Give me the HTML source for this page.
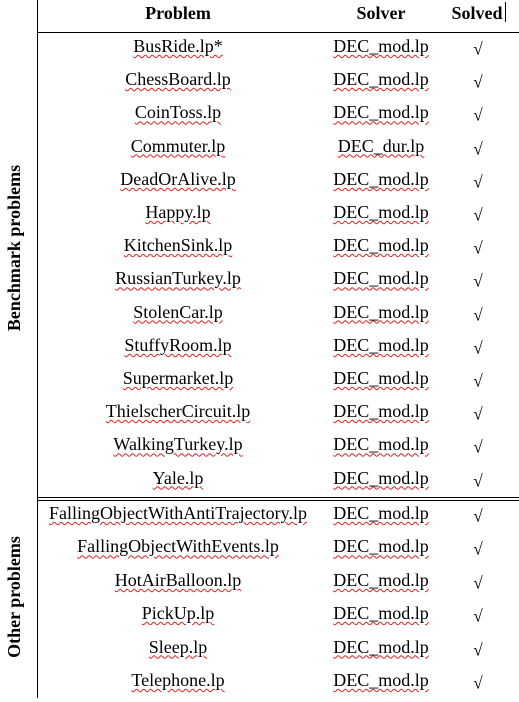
<!DOCTYPE html>
<html><head><style>
body{margin:0;width:519px;height:702px;background:#fff;position:relative;overflow:hidden;font-family:"Liberation Serif",serif;font-size:18px;color:#000}
.t{position:absolute;transform:translate(-50%,-50%);white-space:nowrap;line-height:1}
.w{text-decoration:underline wavy #e02020;text-decoration-thickness:1px;text-underline-offset:2px}
.h{font-weight:bold;font-size:18px}
.v{position:absolute;transform:translate(-50%,-50%) rotate(-90deg);font-weight:bold;font-size:18px;white-space:nowrap;line-height:1}
.l{position:absolute;background:#000}
</style></head><body>
<div class="l" style="left:37px;top:0;width:1px;height:698px"></div>
<div class="l" style="left:37px;top:32px;width:482px;height:1px"></div>
<div class="l" style="left:37px;top:497px;width:482px;height:1px"></div>
<div class="l" style="left:37px;top:500px;width:482px;height:1px"></div>
<div class="l" style="left:505px;top:2px;width:1px;height:20px"></div>
<div class="t h" style="left:178px;top:13px">Problem</div>
<div class="t h" style="left:381px;top:13px">Solver</div>
<div class="t h" style="left:477px;top:13px">Solved</div>
<div class="v" style="left:14px;top:248px">Benchmark problems</div>
<div class="v" style="left:14px;top:597px">Other problems</div>
<div id="rows"></div>
<script>
var a=["BusRide.lp*","ChessBoard.lp","CoinToss.lp","Commuter.lp","DeadOrAlive.lp","Happy.lp","KitchenSink.lp","RussianTurkey.lp","StolenCar.lp","StuffyRoom.lp","Supermarket.lp","ThielscherCircuit.lp","WalkingTurkey.lp","Yale.lp"];
var b=["FallingObjectWithAntiTrajectory.lp","FallingObjectWithEvents.lp","HotAirBalloon.lp","PickUp.lp","Sleep.lp","Telephone.lp"];
var h="";
function row(n,y){var s=n=="Commuter.lp"?"DEC_dur.lp":"DEC_mod.lp";
h+='<div class="t w" style="left:178px;top:'+y+'px">'+n+'</div><div class="t w" style="left:381px;top:'+y+'px">'+s+'</div><div class="t" style="left:478px;top:'+(y+3)+'px;font-size:17px">√</div>';}
a.forEach(function(n,i){row(n,46+i*33.2)});
b.forEach(function(n,i){row(n,513+i*33.4)});
document.getElementById("rows").innerHTML=h;
</script>
</body></html>
